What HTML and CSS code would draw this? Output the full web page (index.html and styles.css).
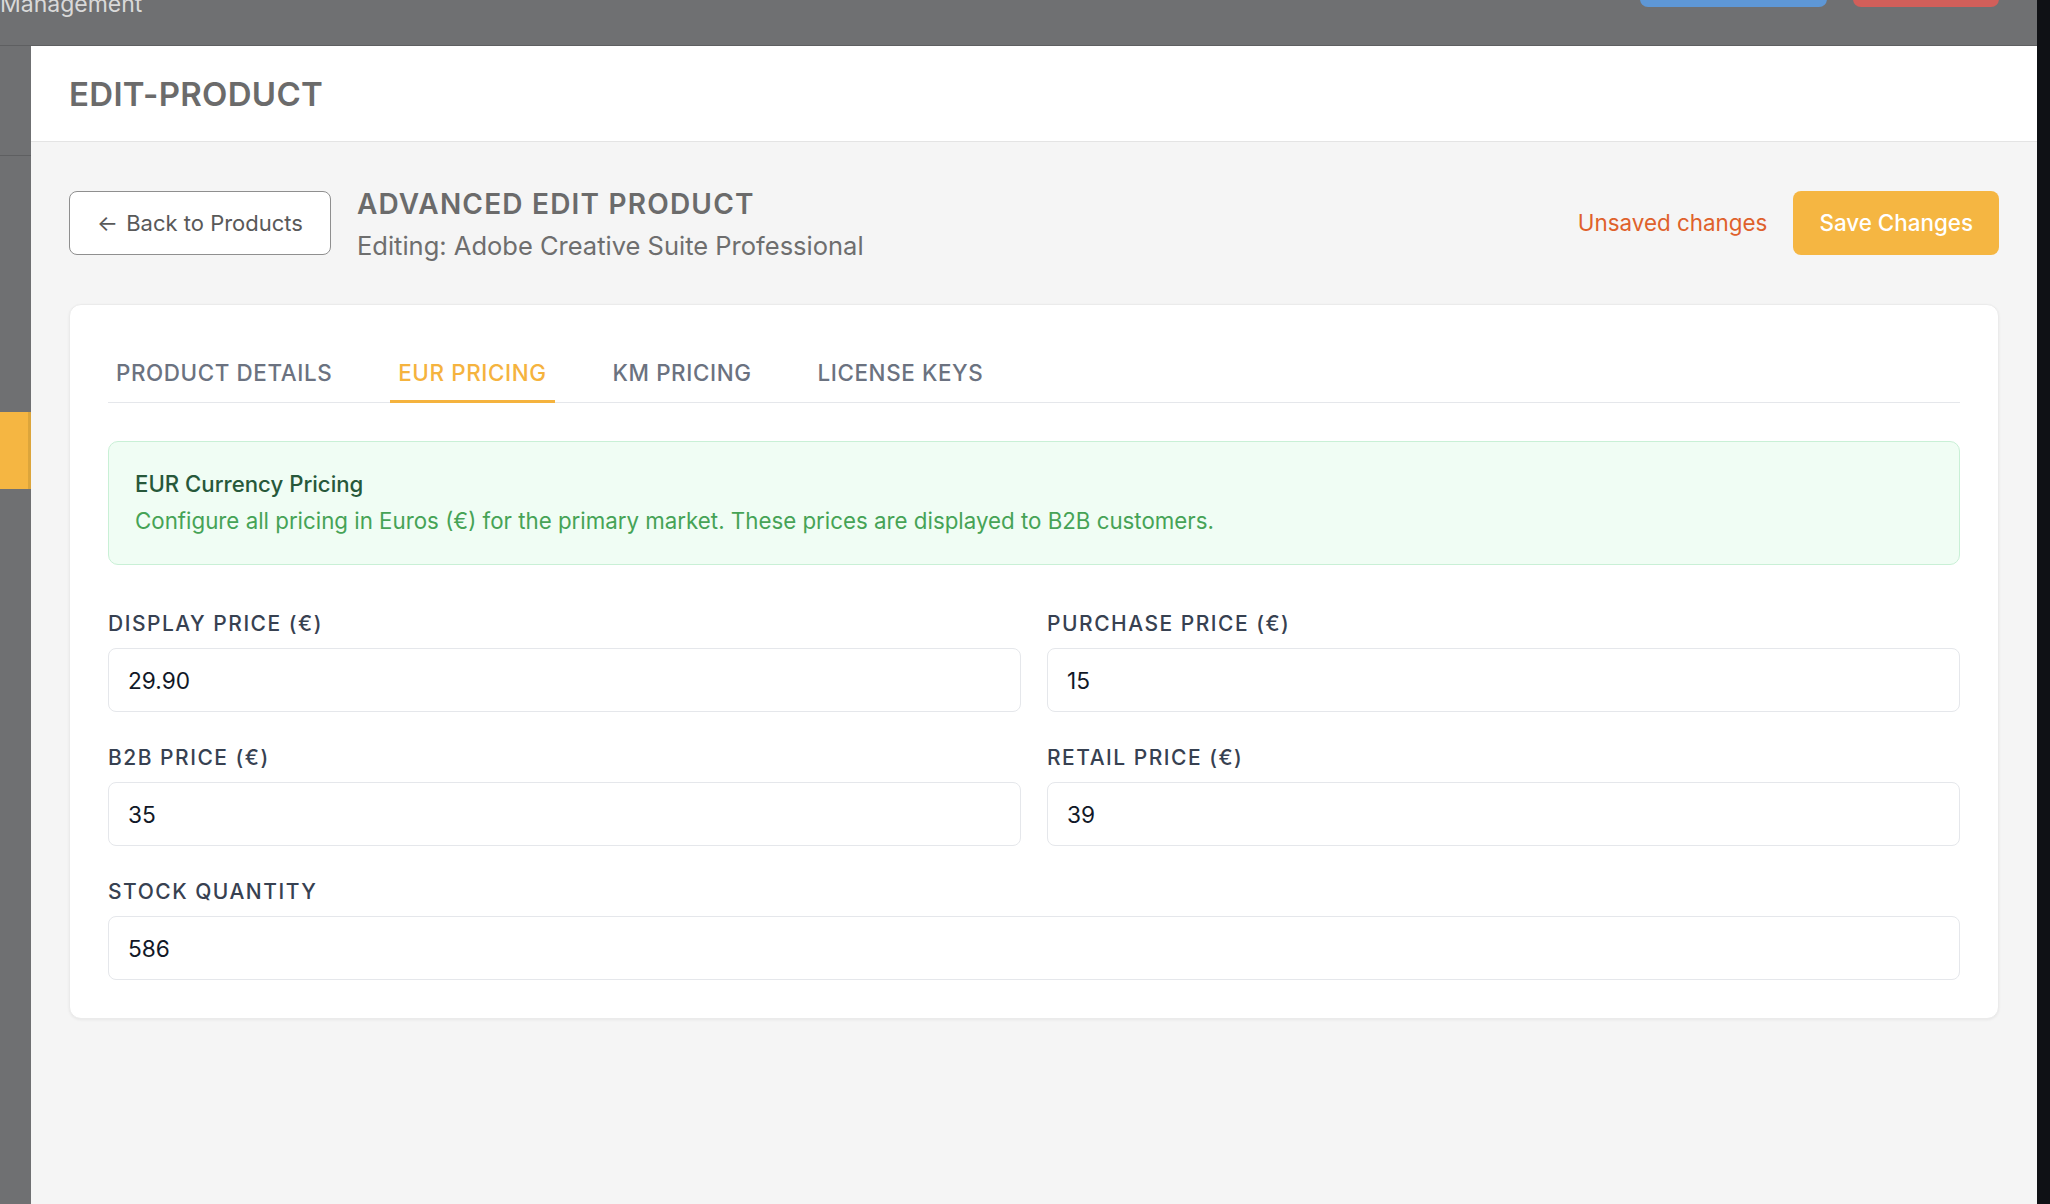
FILE: index.html
```html
<!DOCTYPE html>
<html lang="en">
<head>
<meta charset="utf-8">
<title>Edit Product</title>
<link rel="stylesheet" href="styles.css">
</head>
<body>
<div class="app">
  <div class="viewport">
    <header class="topbar">
      <div class="brand">Management</div>
      <div class="top-actions">
        <span class="top-btn top-btn-blue"></span>
        <span class="top-btn top-btn-red"></span>
      </div>
    </header>
    <div class="layout">
      <aside class="sidebar">
        <div class="side-logo"></div>
        <div class="side-item side-item-active"></div>
      </aside>
      <main class="main">
        <div class="page-header">
          <h1 class="page-title">EDIT-PRODUCT</h1>
        </div>
        <div class="page-body">
          <div class="toolbar">
            <button class="btn-back"><span class="arrow">←</span> Back to Products</button>
            <div class="title-block">
              <h2 class="title">ADVANCED EDIT PRODUCT</h2>
              <p class="subtitle">Editing: Adobe Creative Suite Professional</p>
            </div>
            <div class="toolbar-right">
              <span class="unsaved">Unsaved changes</span>
              <button class="btn-save">Save Changes</button>
            </div>
          </div>
          <section class="card">
            <nav class="tabs">
              <span class="tab">Product Details</span>
              <span class="tab tab-active">EUR Pricing</span>
              <span class="tab">KM Pricing</span>
              <span class="tab">License Keys</span>
            </nav>
            <div class="notice">
              <div class="notice-title">EUR Currency Pricing</div>
              <div class="notice-text">Configure all pricing in Euros (€) for the primary market. These prices are displayed to B2B customers.</div>
            </div>
            <div class="form-grid">
              <div class="field">
                <label class="label">Display Price (€)</label>
                <div class="input">29.90</div>
              </div>
              <div class="field">
                <label class="label">Purchase Price (€)</label>
                <div class="input">15</div>
              </div>
              <div class="field">
                <label class="label">B2B Price (€)</label>
                <div class="input">35</div>
              </div>
              <div class="field">
                <label class="label">Retail Price (€)</label>
                <div class="input">39</div>
              </div>
              <div class="field field-wide">
                <label class="label">Stock Quantity</label>
                <div class="input">586</div>
              </div>
            </div>
          </section>
        </div>
      </main>
    </div>
  </div>
  <div class="scrollbar"></div>
</div>
</body>
</html>
```

FILE: styles.css
```css
* { box-sizing: border-box; }
html, body { margin: 0; padding: 0; }
body {
  font-family: Inter, "Noto Sans", "Liberation Sans", sans-serif;
  background: #f5f5f5;
  width: 2050px;
  height: 1204px;
  overflow: hidden;
}
.app { display: flex; height: 1204px; }
.viewport { flex: 1; display: flex; flex-direction: column; min-width: 0; }
.scrollbar { width: 13px; background: #0f1115; }

.topbar {
  height: 46px;
  flex: none;
  background: #6f7072;
  border-bottom: 1px solid #5e5f61;
  display: flex;
  justify-content: space-between;
  align-items: flex-start;
  overflow: hidden;
  padding-right: 38px;
}
.brand {
  margin-top: -10px;
  font-size: 23px;
  line-height: 28px;
  color: #d9d9d9;
}
.top-actions { display: flex; gap: 26px; margin-top: -57px; }
.top-btn { display: block; height: 64px; border-radius: 8px; }
.top-btn-blue { width: 187px; background: #5e97d6; }
.top-btn-red { width: 146px; background: #d25f5a; }

.layout { flex: 1; display: flex; min-height: 0; }
.sidebar { width: 31px; flex: none; background: #6f7072; }
.side-logo { height: 110px; border-bottom: 1px solid #5e5f61; }
.side-item { height: 77px; }
.side-item-active {
  margin-top: 256px;
  background: #f5b642;
  border-right: 3px solid #dca53b;
}

.main { flex: 1; display: flex; flex-direction: column; background: #f5f5f5; }
.page-header {
  height: 96px;
  flex: none;
  background: #fff;
  border-bottom: 1px solid #e4e4e4;
  display: flex;
  align-items: center;
  padding-left: 38px;
}
.page-title {
  margin: 0;
  font-size: 33px;
  font-weight: 600;
  letter-spacing: 0.3px;
  color: #6b6b6b;
}

.page-body { padding: 40px 38px 0; }
.toolbar { display: flex; align-items: center; gap: 26px; }
.btn-back {
  height: 64px;
  padding: 0 27px;
  border: 1px solid #8f8f8f;
  border-radius: 8px;
  background: #fff;
  font-family: inherit;
  font-size: 22px;
  color: #595959;
}
.btn-back .arrow { margin-right: 2px; }
.title-block { display: flex; flex-direction: column; padding-top: 4px; }
.title {
  margin: 0;
  font-size: 28px;
  line-height: 36px;
  font-weight: 600;
  letter-spacing: 1.2px;
  color: #6b6b6b;
}
.subtitle {
  margin: 7px 0 0;
  font-size: 25.5px;
  line-height: 34px;
  color: #6e6e6e;
}
.toolbar-right { margin-left: auto; display: flex; align-items: center; gap: 26px; }
.unsaved { font-size: 22.4px; color: #df612b; }
.btn-save {
  height: 64px;
  padding: 0 26px;
  border: none;
  border-radius: 8px;
  background: #f5b642;
  color: #fff;
  font-family: inherit;
  font-size: 22.4px;
  font-weight: 500;
}

.card {
  margin-top: 41px;
  background: #fff;
  border: 1px solid #ebebeb;
  border-radius: 12px;
  box-shadow: 0 1px 3px rgba(0,0,0,0.06);
  padding: 38px;
}
.tabs {
  display: flex;
  gap: 50px;
  border-bottom: 1px solid #e5e7eb;
}
.tab {
  padding: 13px 8px 11px;
  margin-bottom: -1px;
  border-bottom: 3px solid transparent;
  font-size: 22.4px;
  line-height: 33px;
  font-weight: 500;
  letter-spacing: 0.6px;
  text-transform: uppercase;
  color: #6b7280;
}
.tab-active { color: #f5b33e; border-bottom-color: #f5b33e; }

.notice {
  margin-top: 38px;
  background: #f0fdf4;
  border: 1px solid #c9f0d6;
  border-radius: 10px;
  padding: 27px 26px 28px;
}
.notice-title {
  font-size: 22.2px;
  line-height: 30px;
  font-weight: 500;
  color: #27583a;
}
.notice-text {
  margin-top: 7px;
  font-size: 22.3px;
  line-height: 30px;
  color: #46a356;
}

.form-grid {
  margin-top: 45px;
  display: grid;
  grid-template-columns: 1fr 1fr;
  gap: 32px 26px;
}
.field-wide { grid-column: 1 / span 2; }
.label {
  display: block;
  margin-bottom: 10px;
  font-size: 21px;
  line-height: 28px;
  font-weight: 500;
  letter-spacing: 1.5px;
  text-transform: uppercase;
  color: #374151;
}
.input {
  height: 64px;
  border: 1px solid #e5e7eb;
  border-radius: 8px;
  background: #fff;
  padding: 0 19px;
  display: flex;
  align-items: center;
  font-size: 22.7px;
  color: #111827;
}
```
